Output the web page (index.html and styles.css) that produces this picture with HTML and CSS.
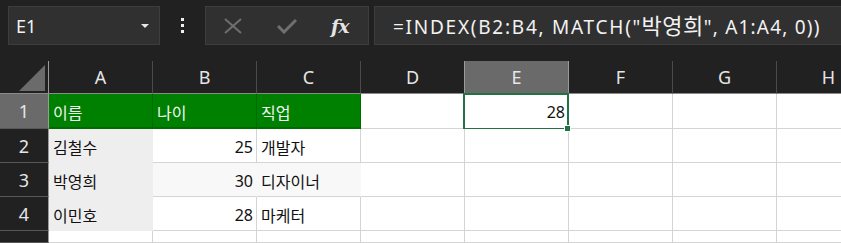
FILE: index.html
```html
<!DOCTYPE html>
<html lang="ko">
<head>
<meta charset="utf-8">
<link rel="stylesheet" href="styles.css">
</head>
<body>
<div class="topbar">
  <div class="namebox"><span>E1</span><span class="caret"></span></div>
  <div class="dots"><i></i><i></i><i></i></div>
  <div class="btns">
    <svg class="ic" width="18" height="16" viewBox="0 0 18 16"><path d="M1 1 L17 15 M17 1 L1 15" stroke="#6f6f6f" stroke-width="2" fill="none"/></svg>
    <svg class="ic" width="20" height="16" viewBox="0 0 20 16"><path d="M1 8 L7 14 L19 2" stroke="#6f6f6f" stroke-width="3" fill="none"/></svg>
    <span class="fx">fx</span>
  </div>
  <div class="formula"><span class="lead">=INDEX(B2:B4, MATCH(</span>"<span class="ko">박영희</span>", A1:A4, 0))</div>
</div>
<div class="sheet">
  <div class="corner"><span class="tri"></span></div>
  <div class="ch">A</div><div class="ch">B</div><div class="ch">C</div><div class="ch">D</div>
  <div class="ch sel">E</div><div class="ch">F</div><div class="ch">G</div><div class="ch">H</div>

  <div class="rh sel">1</div>
  <div class="c g">이름</div><div class="c g">나이</div><div class="c g">직업</div><div class="c"></div>
  <div class="c num active">28</div><div class="c"></div><div class="c"></div><div class="c"></div>

  <div class="rh">2</div>
  <div class="c a">김철수</div><div class="c num">25</div><div class="c">개발자</div><div class="c"></div>
  <div class="c"></div><div class="c"></div><div class="c"></div><div class="c"></div>

  <div class="rh">3</div>
  <div class="c a">박영희</div><div class="c num h">30</div><div class="c h">디자이너</div><div class="c"></div>
  <div class="c"></div><div class="c"></div><div class="c"></div><div class="c"></div>

  <div class="rh">4</div>
  <div class="c a">이민호</div><div class="c num">28</div><div class="c">마케터</div><div class="c"></div>
  <div class="c"></div><div class="c"></div><div class="c"></div><div class="c"></div>

  <div class="rh"></div>
  <div class="c"></div><div class="c"></div><div class="c"></div><div class="c"></div>
  <div class="c"></div><div class="c"></div><div class="c"></div><div class="c"></div>
</div>
</body>
</html>
```
FILE: styles.css
```css
html, body {
  margin: 0;
  padding: 0;
  background: #212121;
  overflow: hidden;
}
body {
  width: 841px;
  height: 243px;
  font-family: "Noto Sans", "Noto Sans CJK KR", sans-serif;
}
.topbar {
  display: flex;
  align-items: flex-start;
  height: 61px;
  padding-top: 6px;
  box-sizing: border-box;
  padding-left: 8px;
}
.namebox {
  width: 152px;
  height: 39px;
  box-sizing: border-box;
  background: #303030;
  border: 1px solid #3d3d3d;
  display: flex;
  align-items: center;
  justify-content: space-between;
  padding: 0 10px 0 7px;
  color: #f2f2f2;
  font-size: 18px;
}
.caret {
  width: 0;
  height: 0;
  border-left: 4px solid transparent;
  border-right: 4px solid transparent;
  border-top: 4px solid #e8e8e8;
}
.dots {
  width: 45px;
  height: 39px;
  display: flex;
  flex-direction: column;
  align-items: center;
  justify-content: center;
  gap: 3px;
}
.dots i {
  display: block;
  width: 3px;
  height: 3px;
  background: #f0f0f0;
}
.btns {
  width: 164px;
  height: 39px;
  box-sizing: border-box;
  background: #303030;
  border: 1px solid #3d3d3d;
  display: flex;
  align-items: center;
  padding-left: 18px;
  gap: 35px;
}
.fx {
  font-family: "DejaVu Serif", "Liberation Serif", serif;
  font-style: italic;
  font-weight: bold;
  color: #e4e4e4;
  font-size: 19px;
  margin-left: -1px;
  letter-spacing: -1px;
}
.formula {
  margin-left: 5px;
  flex: 1;
  height: 39px;
  box-sizing: border-box;
  background: #303030;
  border: 1px solid #3d3d3d;
  border-right: none;
  color: #f2f2f2;
  font-size: 19px;
  letter-spacing: 1.2px;
  line-height: 37px;
  padding-left: 18px;
  white-space: nowrap;
}
.formula .lead {
  letter-spacing: 1.75px;
}
.formula .ko {
  font-size: 22px;
  letter-spacing: 0.5px;
}
.sheet {
  display: grid;
  grid-template-columns: 49px repeat(8, 104px);
  grid-template-rows: 33px 35px 34px 34px 34px 12px;
  font-size: 16px;
}
.corner {
  border-right: 1px solid #9a9a9a;
  border-bottom: 1px solid #8a8a8a;
  position: relative;
}
.tri {
  position: absolute;
  right: 3px;
  bottom: 2px;
  width: 0;
  height: 0;
  border-left: 26px solid transparent;
  border-bottom: 26px solid #6b6b6b;
}
.ch {
  border-right: 1px solid #4b4b4b;
  border-bottom: 1px solid #8a8a8a;
  color: #e6e6e6;
  font-size: 18px;
  display: flex;
  align-items: center;
  justify-content: center;
}
.ch.sel {
  background: #6a6a6a;
  border-right-color: #9a9a9a;
}
.sheet > .ch:nth-child(5) {
  border-right-color: #9a9a9a;
}
.rh {
  background: #212121;
  border-right: 1px solid #9a9a9a;
  border-bottom: 1px solid #575757;
  color: #e6e6e6;
  font-size: 18px;
  display: flex;
  align-items: center;
  justify-content: center;
}
.rh.sel {
  background: #6a6a6a;
}
.c {
  background: #ffffff;
  border-right: 1px solid #d4d4d4;
  border-bottom: 1px solid #d4d4d4;
  color: #111;
  display: flex;
  align-items: center;
  padding: 2px 4px 0;
  white-space: nowrap;
  position: relative;
}
.c.num {
  justify-content: flex-end;
  padding-right: 3px;
}
.c.g {
  background: #008000;
  border-right-color: #006c00;
  border-bottom: 2px solid #006c00;
  color: #f4f4f4;
}
.c.a {
  background: #eeeeee;
  border-right-color: #eeeeee;
  border-bottom-color: #eeeeee;
}
.c.h {
  background: #f8f8f8;
  border-right-color: #f8f8f8;
}
.c.active::after {
  content: "";
  position: absolute;
  left: -2px;
  top: -1px;
  right: -1px;
  bottom: -2px;
  border: 2px solid #217346;
}
.c.active::before {
  content: "";
  position: absolute;
  right: -3px;
  bottom: -4px;
  width: 5px;
  height: 5px;
  background: #217346;
  border: 1px solid #ffffff;
  z-index: 2;
}
```
